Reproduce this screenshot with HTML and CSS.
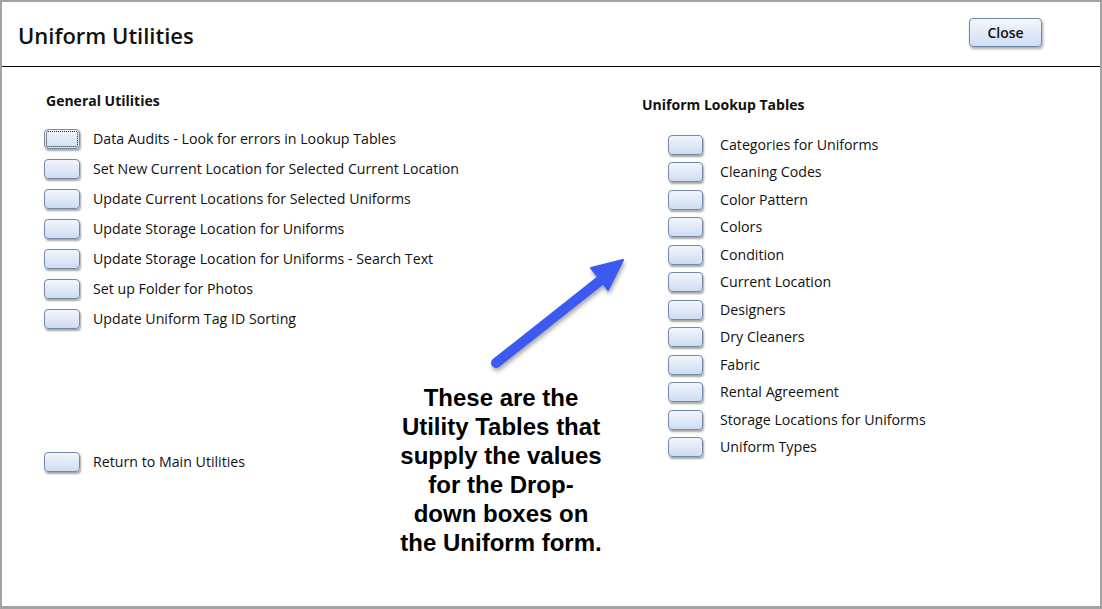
FILE: index.html
```html
<!DOCTYPE html>
<html>
<head>
<meta charset="utf-8">
<link rel="stylesheet" href="styles.css">
</head>
<body>
<div class="window">
  <header class="header">
    <h1 class="title">Uniform Utilities</h1>
    <button class="close-btn">Close</button>
  </header>
  <main class="content">
    <section class="col col-left">
      <h2 class="heading">General Utilities</h2>
      <ul class="list list-left">
        <li class="row"><span class="btn focused"></span><span class="label">Data Audits - Look for errors in Lookup Tables</span></li>
        <li class="row"><span class="btn"></span><span class="label">Set New Current Location for Selected Current Location</span></li>
        <li class="row"><span class="btn"></span><span class="label">Update Current Locations for Selected Uniforms</span></li>
        <li class="row"><span class="btn"></span><span class="label">Update Storage Location for Uniforms</span></li>
        <li class="row"><span class="btn"></span><span class="label">Update Storage Location for Uniforms - Search Text</span></li>
        <li class="row"><span class="btn"></span><span class="label">Set up Folder for Photos</span></li>
        <li class="row"><span class="btn"></span><span class="label">Update Uniform Tag ID Sorting</span></li>
      </ul>
      <div class="row return-row"><span class="btn"></span><span class="label">Return to Main Utilities</span></div>
    </section>
    <section class="col col-right">
      <h2 class="heading">Uniform Lookup Tables</h2>
      <ul class="list list-right">
        <li class="row"><span class="btn"></span><span class="label">Categories for Uniforms</span></li>
        <li class="row"><span class="btn"></span><span class="label">Cleaning Codes</span></li>
        <li class="row"><span class="btn"></span><span class="label">Color Pattern</span></li>
        <li class="row"><span class="btn"></span><span class="label">Colors</span></li>
        <li class="row"><span class="btn"></span><span class="label">Condition</span></li>
        <li class="row"><span class="btn"></span><span class="label">Current Location</span></li>
        <li class="row"><span class="btn"></span><span class="label">Designers</span></li>
        <li class="row"><span class="btn"></span><span class="label">Dry Cleaners</span></li>
        <li class="row"><span class="btn"></span><span class="label">Fabric</span></li>
        <li class="row"><span class="btn"></span><span class="label">Rental Agreement</span></li>
        <li class="row"><span class="btn"></span><span class="label">Storage Locations for Uniforms</span></li>
        <li class="row"><span class="btn"></span><span class="label">Uniform Types</span></li>
      </ul>
    </section>
    <div class="annotation">
      <svg class="arrow" width="160" height="130" viewBox="0 0 160 130">
        <defs>
          <filter id="sh" x="-20%" y="-20%" width="140%" height="140%">
            <feDropShadow dx="1" dy="3" stdDeviation="2" flood-color="#000" flood-opacity="0.35"/>
          </filter>
        </defs>
        <g filter="url(#sh)">
          <line x1="15" y1="113" x2="120" y2="30" stroke="#3c5af0" stroke-width="10" stroke-linecap="round"/>
          <polygon points="142,10 110,18 127,40" fill="#3c5af0" stroke="#3c5af0" stroke-width="2" stroke-linejoin="round"/>
        </g>
      </svg>
      <p class="note">These are the<br>Utility Tables that<br>supply the values<br>for the Drop-<br>down boxes on<br>the Uniform form.</p>
    </div>
  </main>
</div>
</body>
</html>
```

FILE: styles.css
```css
* { box-sizing: border-box; }
html, body { margin: 0; padding: 0; background: #fff; }
body { width: 1102px; height: 609px; overflow: hidden; font-family: "Open Sans", "Noto Sans", sans-serif; color: #111; }
.window {
  width: 1102px; height: 609px;
  border: 2px solid #a3a3a3;
  border-bottom-width: 3px;
  background: #fff;
  display: flex; flex-direction: column;
  position: relative;
}
.header {
  height: 65px;
  border-bottom: 1px solid #000;
  display: flex; align-items: flex-start; justify-content: space-between;
  padding: 0 58px 0 16px;
}
.title {
  margin: 18px 0 0 0;
  font-size: 22px; font-weight: 600; line-height: 30px; color: #111;
}
.close-btn {
  margin-top: 16px;
  width: 73px; height: 29px;
  font-family: inherit; font-size: 14px; font-weight: 600; color: #111;
  border: 1px solid #6f87a8; border-radius: 4px;
  background: linear-gradient(#f4f7fc, #d0ddf2);
  box-shadow: 1px 2px 3px rgba(0,0,0,0.35);
  padding: 0;
}
.content { position: relative; flex: 1; display: flex; }
.col-left { width: 599px; padding: 24px 0 0 42px; display: flex; flex-direction: column; }
.col-right { flex: 1; padding: 28px 0 0 39px; }
.heading { margin: 0; font-size: 14px; font-weight: 700; line-height: 20px; padding-left: 2px; }
.list { list-style: none; margin: 0; padding: 0; }
.list-left { margin-top: 13px; }
.list-right { margin-top: 16px; padding-left: 28px; }
.row { display: flex; align-items: center; height: 30px; }
.list-right .row { height: 27.5px; }
.btn {
  flex: none;
  width: 36px; height: 20px;
  border: 1px solid #7489a8; border-radius: 4px;
  background: linear-gradient(#f3f6fc, #cedcf1);
  box-shadow: 1px 2px 2px rgba(0,0,0,0.35);
  position: relative;
}
.list-right .btn { width: 35px; }
.btn.focused::after {
  content: ""; position: absolute; inset: 1px;
  border: 1px dotted #222; border-radius: 2px;
}
.label { margin-left: 13px; font-size: 14.2px; line-height: 20px; white-space: nowrap; }
.list-right .label { margin-left: 17px; }
.return-row { margin-top: 113px; }
.annotation {
  position: absolute; left: 378px; top: 183px; width: 242px;
  display: flex; flex-direction: column; align-items: center;
}
.arrow { display: block; align-self: flex-start; margin-left: 101px; }
.note {
  margin: 0; margin-top: 3px;
  font-family: "Liberation Sans", Arial, sans-serif; font-weight: 700;
  font-size: 24px; line-height: 29px; text-align: center; color: #000;
}
```
